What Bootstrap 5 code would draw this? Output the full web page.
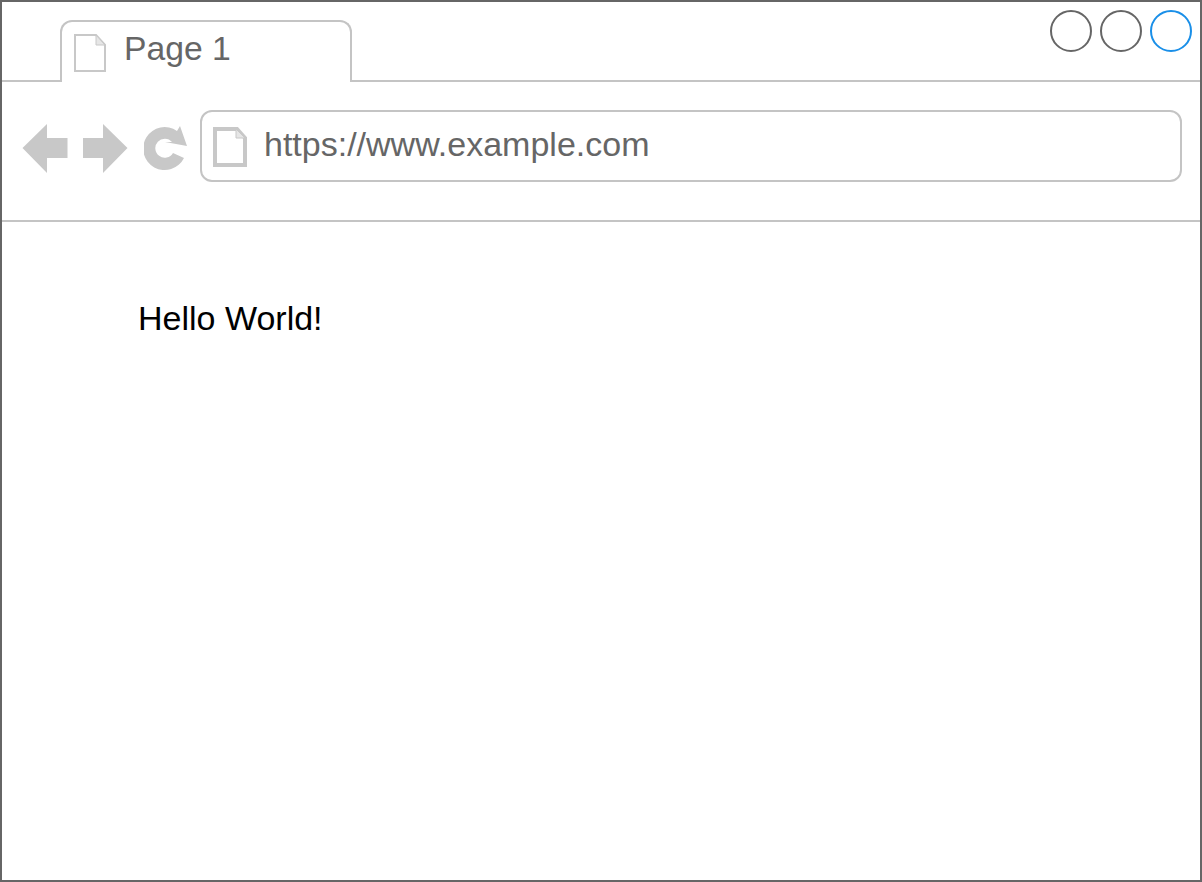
<!DOCTYPE html>
<html lang="en">
<head>
<meta charset="utf-8">
<title>Browser wireframe</title>
<link href="https://cdn.jsdelivr.net/npm/bootstrap@5.3.0/dist/css/bootstrap.min.css" rel="stylesheet">
<style>
html,body{height:100%;margin:0;background:#fff;overflow:hidden}
body{font-family:"Liberation Sans",Arial,sans-serif}
.wf-frame{width:1202px;height:882px;border:2px solid #666}
.wf-strip{height:80px;border-bottom:2px solid #c4c4c4;padding-left:58px;padding-right:8px}
.wf-tab{width:292px;height:62px;margin-top:18px;margin-bottom:-2px;background:#fff;border:2px solid #c4c4c4;border-bottom:0;border-radius:12px 12px 0 0;padding-left:12px;color:#666;font-size:33.7px;line-height:1}
.wf-tab-label{margin-left:18px;margin-top:10px}
.wf-tab-icon{margin-top:12px}
.wf-dots{gap:8px;margin-top:8px}
.wf-dot{width:42px;height:42px;border:2px solid #666}
.wf-dot-on{border-color:#1a8fe8}
.wf-bar{height:140px;border-bottom:2px solid #c4c4c4;padding:0 18px 0 20px}
.wf-nav{margin-right:12px;margin-top:-4px}
.wf-nav-fwd{margin-left:14px}
.wf-nav-reload{margin-left:16px}
.wf-addr{height:72px;margin-top:-10px;border:2px solid #c4c4c4;border-radius:12px;padding-left:11px;color:#666;font-size:34px}
.wf-addr-icon{margin-top:2px}
.wf-url{margin-left:17px;margin-top:-4px}
.wf-body{padding:76px 0 0 136px;font-size:34px;line-height:1.2;color:#000}
</style>
</head>
<body>
<div class="wf-frame d-flex flex-column">
  <div class="wf-strip d-flex justify-content-between align-items-start">
    <div class="wf-tab d-flex align-items-start">
      <svg class="wf-tab-icon flex-shrink-0" width="32" height="38" viewBox="0 0 32 38" aria-hidden="true">
        <path d="M1 1H22L31 11V37H1Z" fill="#fff" stroke="#c8c8c8" stroke-width="2"/>
        <path d="M22 1V11H31Z" fill="#e6e6e6" stroke="#c8c8c8" stroke-width="1"/>
      </svg>
      <span class="wf-tab-label">Page 1</span>
    </div>
    <div class="wf-dots d-flex">
      <div class="wf-dot rounded-circle"></div>
      <div class="wf-dot rounded-circle"></div>
      <div class="wf-dot wf-dot-on rounded-circle"></div>
    </div>
  </div>
  <div class="wf-bar d-flex align-items-center">
    <div class="wf-nav d-flex align-items-center flex-shrink-0">
      <svg width="46" height="50" viewBox="0 0 46 50" aria-hidden="true"><path d="M0.5 24L25 0V14H45.5V34H25V49Z" fill="#c8c8c8"/></svg>
      <svg class="wf-nav-fwd" width="46" height="50" viewBox="0 0 46 50" aria-hidden="true"><path d="M45.5 24L21 0V14H1V34H21V49Z" fill="#c8c8c8"/></svg>
      <svg class="wf-nav-reload" width="44" height="46" viewBox="0 0 44 46" aria-hidden="true"><path fill-rule="evenodd" d="M33 5L36 0L43 20L21 16L28 16A9.5 9.5 0 1 0 29 27L40 32A21.5 21.5 0 1 1 33 5Z" fill="#c8c8c8"/></svg>
    </div>
    <div class="wf-addr flex-grow-1 d-flex align-items-center">
      <svg class="wf-addr-icon flex-shrink-0" width="34" height="40" viewBox="0 0 34 40" aria-hidden="true">
        <path d="M2 2H24L32 11V38H2Z" fill="#fff" stroke="#c8c8c8" stroke-width="4"/>
        <path d="M23 2V11H32Z" fill="#e6e6e6" stroke="#c8c8c8" stroke-width="1"/>
      </svg>
      <span class="wf-url">https://www.example.com</span>
    </div>
  </div>
  <div class="wf-body flex-grow-1">Hello World!</div>
</div>
</body>
</html>
